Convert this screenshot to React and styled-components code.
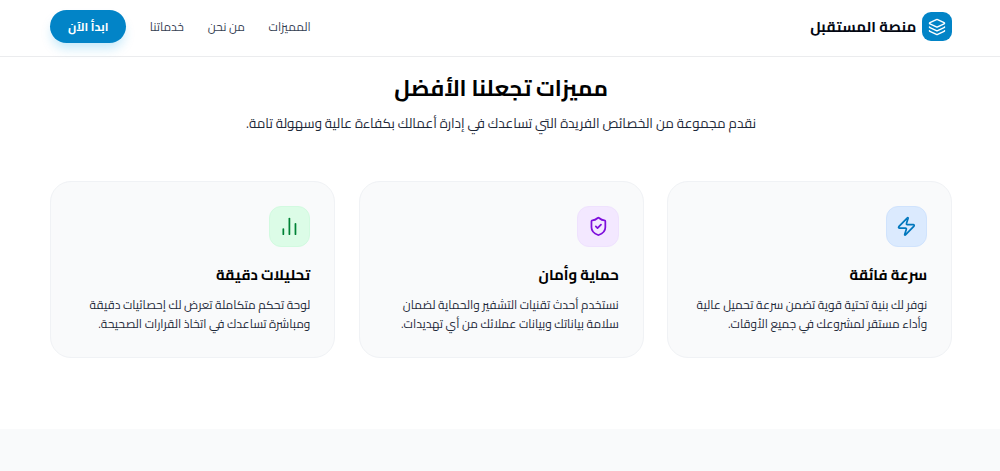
import React from "react";
import styled, { createGlobalStyle } from "styled-components";
import { Layers, Zap, ShieldCheck } from "lucide-react";

const GlobalStyle = createGlobalStyle`
  * {
    box-sizing: border-box;
    margin: 0;
    padding: 0;
  }

  body {
    background: #fff;
    color: #030712;
    font-family: "Cairo", "DejaVu Sans Condensed", "DejaVu Sans", sans-serif;
    overflow: hidden;
  }
`;

const BarsIcon = () => (
  <svg width="20.8" height="20.8" viewBox="0 0 24 24" fill="none" stroke="currentColor" strokeWidth="2" strokeLinecap="round">
    <path d="M5 21v-6" />
    <path d="M12 21V3" />
    <path d="M19 21V9" />
  </svg>
);

const features = [
  {
    title: "سرعة فائقة",
    lines: ["نوفر لك بنية تحتية قوية تضمن سرعة تحميل عالية", "وأداء مستقر لمشروعك في جميع الأوقات."],
    icon: <Zap size={20.8} />,
    color: "#0077bd",
    tint: "#dbeafe",
    edge: "#d0e3fd"
  },
  {
    title: "حماية وأمان",
    lines: ["نستخدم أحدث تقنيات التشفير والحماية لضمان", "سلامة بياناتك وبيانات عملائك من أي تهديدات."],
    icon: <ShieldCheck size={20.8} />,
    color: "#7e0fdc",
    tint: "#f3e8ff",
    edge: "#efe2fe"
  },
  {
    title: "تحليلات دقيقة",
    lines: ["لوحة تحكم متكاملة تعرض لك إحصائيات دقيقة", "ومباشرة تساعدك في اتخاذ القرارات الصحيحة."],
    icon: <BarsIcon />,
    color: "#008236",
    tint: "#dcfce7",
    edge: "#d2fae0"
  }
];

const App = () => {
  return (
    <Page dir="rtl" lang="ar">
      <GlobalStyle />
      <Header>
        <Brand>
          <Logo>
            <Layers size={18} strokeWidth={2} />
          </Logo>
          <BrandName>منصة المستقبل</BrandName>
        </Brand>
        <Nav>
          <NavLink href="#features">المميزات</NavLink>
          <NavLink href="#about">من نحن</NavLink>
          <NavLink href="#services">خدماتنا</NavLink>
          <StartButton>ابدأ الآن</StartButton>
        </Nav>
      </Header>
      <Features id="features">
        <Title>مميزات تجعلنا الأفضل</Title>
        <Subtitle>نقدم مجموعة من الخصائص الفريدة التي تساعدك في إدارة أعمالك بكفاءة عالية وسهولة تامة.</Subtitle>
        <Cards>
          {features.map(({ title, lines, icon, color, tint, edge }) => (
            <Card key={title}>
              <IconTile $color={color} $tint={tint} $edge={edge}>
                {icon}
              </IconTile>
              <CardTitle>{title}</CardTitle>
              <CardText>
                {lines[0]}
                <br />
                {lines[1]}
              </CardText>
            </Card>
          ))}
        </Cards>
      </Features>
      <NextSection id="about" />
    </Page>
  );
};

const Page = styled.div`
  display: flex;
  flex-direction: column;
  height: 471px;
`;

const Header = styled.header`
  display: flex;
  justify-content: space-between;
  align-items: center;
  height: 57px;
  padding: 0 48px 3px 50.4px;
  border-bottom: 1px solid #ebecee;
`;

const Brand = styled.div`
  display: flex;
  align-items: center;
  gap: 6px;
`;

const Logo = styled.div`
  display: flex;
  justify-content: center;
  align-items: center;
  width: 29.7px;
  height: 29.7px;
  border-radius: 9px;
  background: #0284c7;
  color: #fff;
`;

const BrandName = styled.span`
  font-size: 14.84px;
  font-weight: 700;
  line-height: 26px;
  white-space: nowrap;
`;

const Nav = styled.nav`
  display: flex;
  align-items: center;
  gap: 23.75px;
`;

const NavLink = styled.a`
  color: #364153;
  font-size: 11.87px;
  line-height: 20px;
  text-decoration: none;
  white-space: nowrap;
`;

const StartButton = styled.button`
  width: 75.6px;
  height: 33px;
  border: none;
  border-radius: 17px;
  background: #0284c7;
  box-shadow: 0 7px 11px -2px rgba(14, 165, 233, 0.25);
  color: #fff;
  font-family: inherit;
  font-size: 11.87px;
  font-weight: 700;
  white-space: nowrap;
`;

const Features = styled.section`
  flex: none;
  height: 372px;
  padding: 14px 48px 0 50.3px;
  text-align: center;
`;

const Title = styled.h2`
  color: #000;
  font-size: 22.26px;
  font-weight: 700;
  line-height: 34px;
  white-space: nowrap;
`;

const Subtitle = styled.p`
  margin-top: 7px;
  color: #1e2939;
  font-size: 13.35px;
  line-height: 24px;
  white-space: nowrap;
`;

const Cards = styled.div`
  display: grid;
  grid-template-columns: repeat(3, 1fr);
  gap: 23.75px;
  margin-top: 45px;
`;

const Card = styled.article`
  height: 177px;
  padding: 24px 23.75px;
  border: 1px solid #f0f2f5;
  border-radius: 21px;
  background: #f9fafb;
  text-align: right;
`;

const IconTile = styled.div`
  display: flex;
  justify-content: center;
  align-items: center;
  width: 41.5px;
  height: 41px;
  border: 1px solid ${props => props.$edge};
  border-radius: 12px;
  background: ${props => props.$tint};
  color: ${props => props.$color};
`;

const CardTitle = styled.h3`
  margin-top: 16px;
  color: #000;
  font-size: 14.84px;
  font-weight: 700;
  line-height: 24px;
  white-space: nowrap;
`;

const CardText = styled.p`
  margin-top: 8.5px;
  color: #1e2939;
  font-size: 11.87px;
  line-height: 19.3px;
  white-space: nowrap;
`;

const NextSection = styled.section`
  flex: 1;
  background: #f9fafb;
`;

export default App;
